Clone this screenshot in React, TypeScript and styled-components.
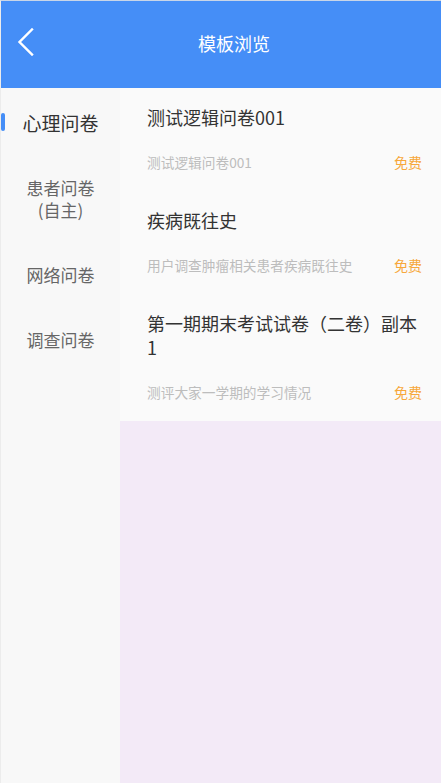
import React, { useState } from "react";
import styled, { createGlobalStyle } from "styled-components";

interface Template {
  id: number;
  title: string;
  desc: string;
  price: string;
}

const categories = ["心理问卷", "患者问卷\n(自主)", "网络问卷", "调查问卷"];

const templates: Template[] = [
  { id: 1, title: "测试逻辑问卷001", desc: "测试逻辑问卷001", price: "免费" },
  { id: 2, title: "疾病既往史", desc: "用户调查肿瘤相关患者疾病既往史", price: "免费" },
  {
    id: 3,
    title: "第一期期末考试试卷（二卷）副本1",
    desc: "测评大家一学期的学习情况",
    price: "免费",
  },
];

const GlobalStyle = createGlobalStyle`
  html, body {
    margin: 0;
    padding: 0;
    background: #f8f8f8;
  }
  body {
    font-family: "Noto Sans CJK SC", "Noto Sans", sans-serif;
  }
`;

const BackIcon = () => (
  <svg width="20" height="28" viewBox="0 0 20 28" fill="none">
    <path
      d="M16 1.5 L3.5 14 L16 26.5"
      stroke="#ffffff"
      strokeWidth="2.4"
      strokeLinecap="square"
      strokeLinejoin="miter"
    />
  </svg>
);

export default function App() {
  const [active, setActive] = useState(0);

  return (
    <>
      <GlobalStyle />
      <Page>
        <Header>
          <BackButton>
            <BackIcon />
          </BackButton>
          <HeaderTitle>模板浏览</HeaderTitle>
          <HeaderSpacer />
        </Header>
        <Body>
          <Sidebar>
            {categories.map((name, index) => (
              <SideItem
                key={name}
                $active={active === index}
                onClick={() => setActive(index)}
              >
                {name}
              </SideItem>
            ))}
          </Sidebar>
          <Content>
            <List>
              {templates.map((item) => (
                <Row key={item.id}>
                  <RowTitle>{item.title}</RowTitle>
                  <RowFooter>
                    <RowDesc>{item.desc}</RowDesc>
                    <Price>{item.price}</Price>
                  </RowFooter>
                </Row>
              ))}
            </List>
          </Content>
        </Body>
      </Page>
    </>
  );
}

const Page = styled.div`
  min-height: 100vh;
  box-sizing: border-box;
  display: flex;
  flex-direction: column;
  border-top: 1px solid #c9d6e8;
  border-left: 1px solid #ececec;
`;

const Header = styled.div`
  height: 87px;
  flex-shrink: 0;
  display: flex;
  align-items: center;
  background: #458ef7;
`;

const BackButton = styled.div`
  width: 50px;
  display: flex;
  justify-content: flex-start;
  padding-left: 15px;
  padding-bottom: 6px;
  box-sizing: border-box;
  cursor: pointer;
`;

const HeaderTitle = styled.div`
  flex: 1;
  text-align: center;
  color: #ffffff;
  font-size: 18px;
  line-height: 24px;
  padding-bottom: 4px;
`;

const HeaderSpacer = styled.div`
  width: 24px;
`;

const Body = styled.div`
  flex: 1;
  display: flex;
`;

const Sidebar = styled.div`
  width: 119px;
  flex-shrink: 0;
  padding-top: 2px;
  background: #f8f8f8;
`;

const SideItem = styled.div<{ $active: boolean }>`
  position: relative;
  padding: 21.5px 0;
  text-align: center;
  white-space: pre-line;
  line-height: 22px;
  font-size: ${(p) => (p.$active ? "19px" : "17px")};
  color: ${(p) => (p.$active ? "#333333" : "#666666")};
  cursor: pointer;

  &::before {
    content: "";
    display: ${(p) => (p.$active ? "block" : "none")};
    position: absolute;
    left: 0;
    top: 23px;
    width: 4px;
    height: 18px;
    border-radius: 2px;
    background: #458ef7;
  }
`;

const Content = styled.div`
  flex: 1;
  background: #f3eaf7;
`;

const List = styled.div`
  background: #fafafa;
`;

const Row = styled.div`
  padding: 17px 19px 20px 27px;
`;

const RowTitle = styled.div`
  font-size: 18px;
  line-height: 24px;
  color: #333333;
`;

const RowFooter = styled.div`
  margin-top: 24px;
  display: flex;
  justify-content: space-between;
  align-items: center;
  line-height: 18px;
`;

const RowDesc = styled.span`
  font-size: 13.7px;
  color: #bdbdbd;
`;

const Price = styled.span`
  font-size: 14px;
  color: #f7a83c;
`;
